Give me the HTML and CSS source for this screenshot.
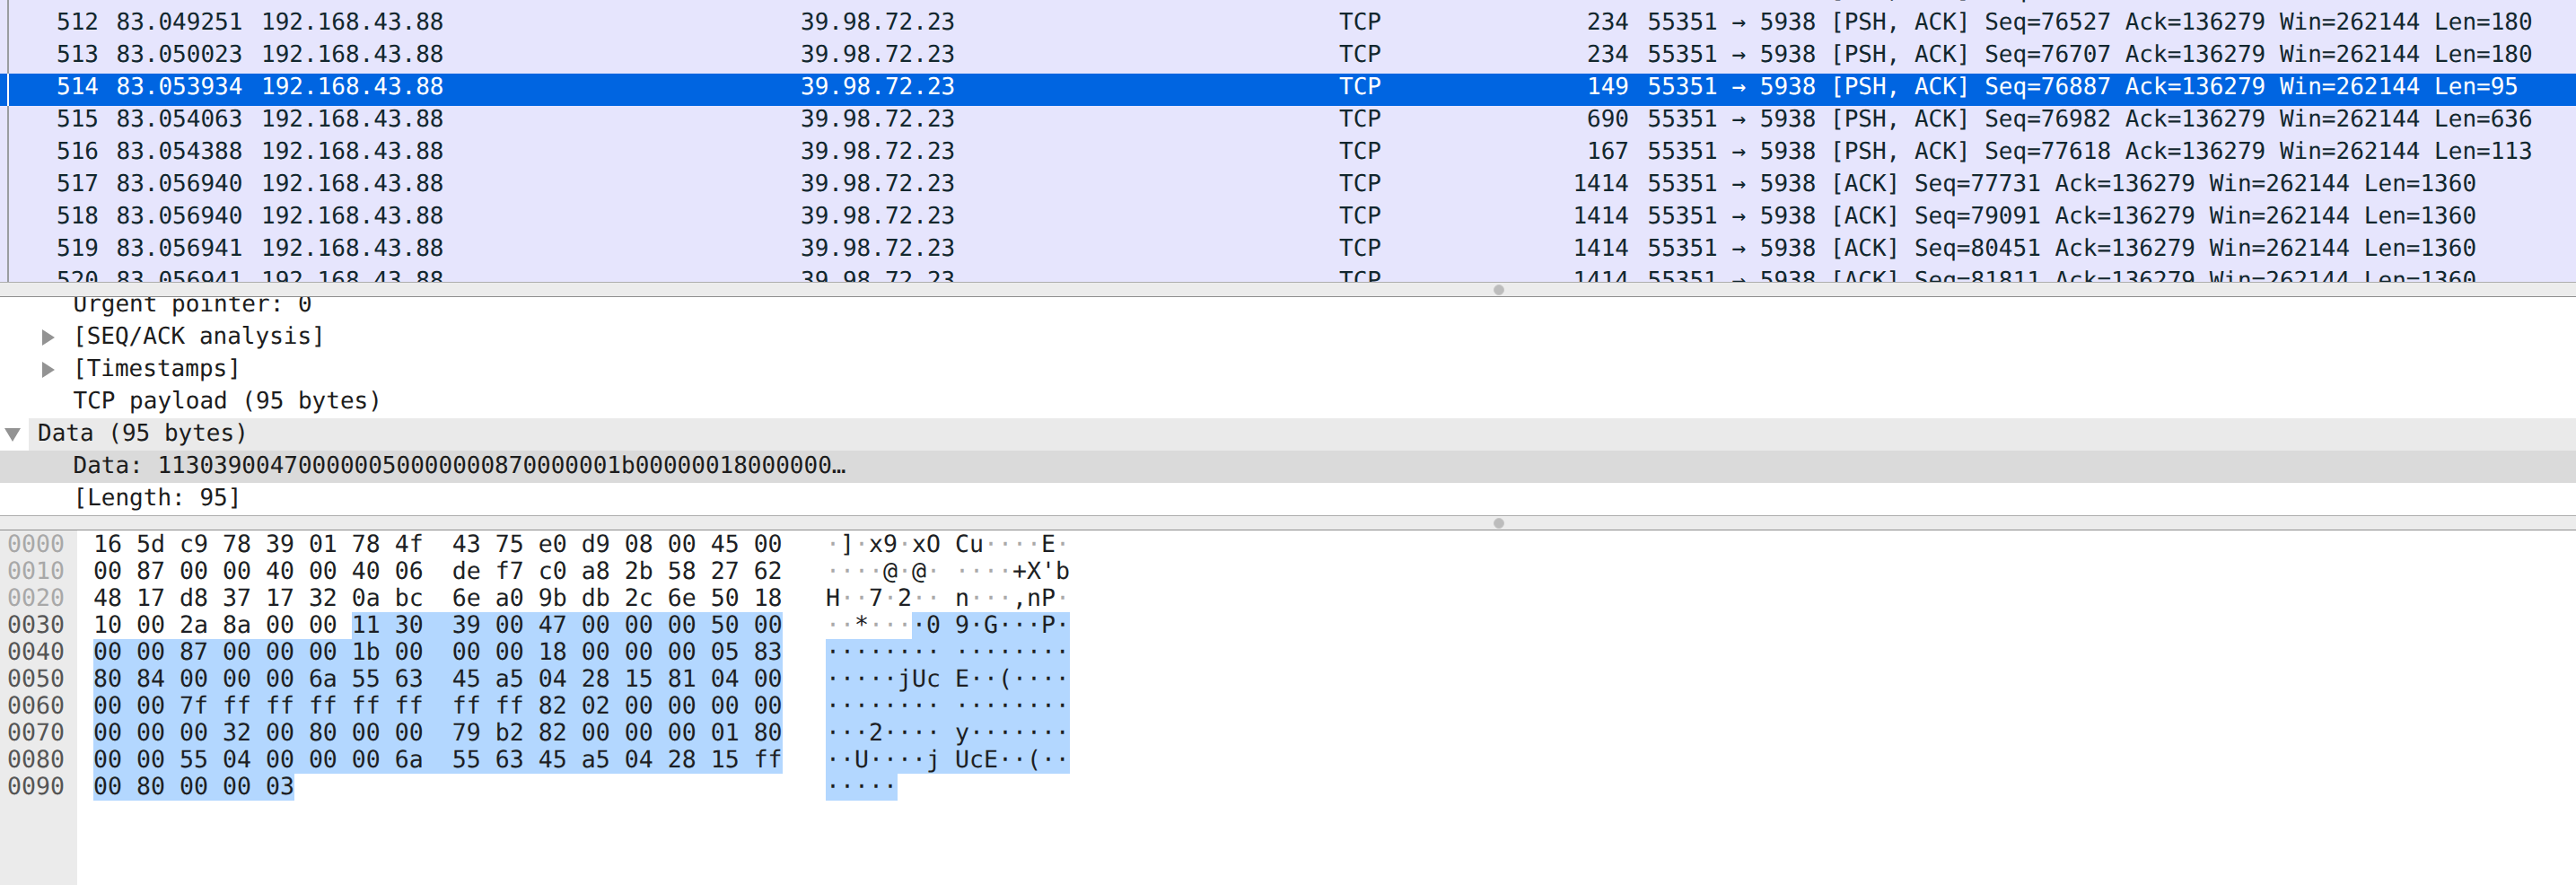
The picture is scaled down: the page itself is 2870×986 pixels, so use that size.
FILE: index.html
```html
<!DOCTYPE html>
<html lang="en">
<head>
<meta charset="utf-8">
<title>Wireshark packet view</title>
<link rel="stylesheet" href="styles.css">
</head>
<body>
<main class="app">
  <section class="packets">
    <div class="packet-list">
      <div class="row"><span class="rule"></span><span class="no">511</span><span class="time">83.048437</span><span>192.168.43.88</span><span>39.98.72.23</span><span>TCP</span><span class="len">234</span><span class="info">55351 → 5938 [PSH, ACK] Seq=76347 Ack=136279 Win=262144 Len=180</span></div>
      <div class="row"><span class="rule"></span><span class="no">512</span><span class="time">83.049251</span><span>192.168.43.88</span><span>39.98.72.23</span><span>TCP</span><span class="len">234</span><span class="info">55351 → 5938 [PSH, ACK] Seq=76527 Ack=136279 Win=262144 Len=180</span></div>
      <div class="row"><span class="rule"></span><span class="no">513</span><span class="time">83.050023</span><span>192.168.43.88</span><span>39.98.72.23</span><span>TCP</span><span class="len">234</span><span class="info">55351 → 5938 [PSH, ACK] Seq=76707 Ack=136279 Win=262144 Len=180</span></div>
      <div class="row selected"><span class="rule"></span><span class="no">514</span><span class="time">83.053934</span><span>192.168.43.88</span><span>39.98.72.23</span><span>TCP</span><span class="len">149</span><span class="info">55351 → 5938 [PSH, ACK] Seq=76887 Ack=136279 Win=262144 Len=95</span></div>
      <div class="row"><span class="rule"></span><span class="no">515</span><span class="time">83.054063</span><span>192.168.43.88</span><span>39.98.72.23</span><span>TCP</span><span class="len">690</span><span class="info">55351 → 5938 [PSH, ACK] Seq=76982 Ack=136279 Win=262144 Len=636</span></div>
      <div class="row"><span class="rule"></span><span class="no">516</span><span class="time">83.054388</span><span>192.168.43.88</span><span>39.98.72.23</span><span>TCP</span><span class="len">167</span><span class="info">55351 → 5938 [PSH, ACK] Seq=77618 Ack=136279 Win=262144 Len=113</span></div>
      <div class="row"><span class="rule"></span><span class="no">517</span><span class="time">83.056940</span><span>192.168.43.88</span><span>39.98.72.23</span><span>TCP</span><span class="len">1414</span><span class="info">55351 → 5938 [ACK] Seq=77731 Ack=136279 Win=262144 Len=1360</span></div>
      <div class="row"><span class="rule"></span><span class="no">518</span><span class="time">83.056940</span><span>192.168.43.88</span><span>39.98.72.23</span><span>TCP</span><span class="len">1414</span><span class="info">55351 → 5938 [ACK] Seq=79091 Ack=136279 Win=262144 Len=1360</span></div>
      <div class="row"><span class="rule"></span><span class="no">519</span><span class="time">83.056941</span><span>192.168.43.88</span><span>39.98.72.23</span><span>TCP</span><span class="len">1414</span><span class="info">55351 → 5938 [ACK] Seq=80451 Ack=136279 Win=262144 Len=1360</span></div>
      <div class="row"><span class="rule"></span><span class="no">520</span><span class="time">83.056941</span><span>192.168.43.88</span><span>39.98.72.23</span><span>TCP</span><span class="len">1414</span><span class="info">55351 → 5938 [ACK] Seq=81811 Ack=136279 Win=262144 Len=1360</span></div>
    </div>
  </section>

  <div class="splitter"><span class="handle"></span></div>

  <section class="details">
    <div class="tree">
      <div class="node leaf">Urgent pointer: 0</div>
      <div class="node branch"><span class="caret-right"></span>[SEQ/ACK analysis]</div>
      <div class="node branch"><span class="caret-right"></span>[Timestamps]</div>
      <div class="node leaf">TCP payload (95 bytes)</div>
      <div class="node root"><span class="root-caret"><span class="caret-down"></span></span><span class="root-label">Data (95 bytes)</span></div>
      <div class="node leaf current">Data: 113039004700000050000000870000001b00000018000000…</div>
      <div class="node leaf">[Length: 95]</div>
    </div>
  </section>

  <div class="splitter"><span class="handle"></span></div>

  <section class="hex">
    <div class="offsets">
      <div class="faint">0000</div>
      <div class="faint">0010</div>
      <div class="faint">0020</div>
      <div>0030</div>
      <div>0040</div>
      <div>0050</div>
      <div>0060</div>
      <div>0070</div>
      <div>0080</div>
      <div>0090</div>
    </div>
    <div class="dump">
      <div class="dump-row"><span class="bytes">16 5d c9 78 39 01 78 4f  43 75 e0 d9 08 00 45 00</span><span class="ascii"><span class="n">·</span>]<span class="n">·</span>x9<span class="n">·</span>xO Cu<span class="n">····</span>E<span class="n">·</span></span></div>
      <div class="dump-row"><span class="bytes">00 87 00 00 40 00 40 06  de f7 c0 a8 2b 58 27 62</span><span class="ascii"><span class="n">····</span>@<span class="n">·</span>@<span class="n">·</span> <span class="n">····</span>+X'b</span></div>
      <div class="dump-row"><span class="bytes">48 17 d8 37 17 32 0a bc  6e a0 9b db 2c 6e 50 18</span><span class="ascii">H<span class="n">··</span>7<span class="n">·</span>2<span class="n">··</span> n<span class="n">···</span>,nP<span class="n">·</span></span></div>
      <div class="dump-row"><span class="bytes">10 00 2a 8a 00 00 <span class="hl">11 30  39 00 47 00 00 00 50 00</span></span><span class="ascii"><span class="n">··</span>*<span class="n">···</span><span class="hl">·0 9·G···P·</span></span></div>
      <div class="dump-row"><span class="bytes"><span class="hl">00 00 87 00 00 00 1b 00  00 00 18 00 00 00 05 83</span></span><span class="ascii"><span class="hl">········ ········</span></span></div>
      <div class="dump-row"><span class="bytes"><span class="hl">80 84 00 00 00 6a 55 63  45 a5 04 28 15 81 04 00</span></span><span class="ascii"><span class="hl">·····jUc E··(····</span></span></div>
      <div class="dump-row"><span class="bytes"><span class="hl">00 00 7f ff ff ff ff ff  ff ff 82 02 00 00 00 00</span></span><span class="ascii"><span class="hl">········ ········</span></span></div>
      <div class="dump-row"><span class="bytes"><span class="hl">00 00 00 32 00 80 00 00  79 b2 82 00 00 00 01 80</span></span><span class="ascii"><span class="hl">···2···· y·······</span></span></div>
      <div class="dump-row"><span class="bytes"><span class="hl">00 00 55 04 00 00 00 6a  55 63 45 a5 04 28 15 ff</span></span><span class="ascii"><span class="hl">··U····j UcE··(··</span></span></div>
      <div class="dump-row"><span class="bytes"><span class="hl">00 80 00 00 03</span></span><span class="ascii"><span class="hl">·····</span></span></div>
    </div>
  </section>
</main>
</body>
</html>
```
FILE: styles.css
```css
* {
  box-sizing: border-box;
}

html,
body {
  margin: 0;
  height: 100%;
  background: #ffffff;
}

body {
  font-family: "DejaVu Sans Mono", "Liberation Mono", monospace;
  text-rendering: geometricPrecision;
  white-space: nowrap;
  overflow: hidden;
}

.app {
  display: grid;
  grid-template-rows: 314px 17px 243px 17px 1fr;
  height: 986px;
}

/* Packet list */
.packets {
  overflow: hidden;
  background: #e6e5fd;
}

.packet-list {
  margin-top: -26px;
  font-size: 26px;
  line-height: 31px;
  color: #12272e;
}

.row {
  display: grid;
  grid-template-columns: 8px 2px 100px 181px 601px 600px 200px 123px 1fr;
  height: 36px;
}

.rule {
  grid-column: 2;
  background: #9a9da1;
}

.no {
  text-align: right;
}

.time {
  padding-left: 19.5px;
}

.len {
  text-align: right;
}

.info {
  padding-left: 20.5px;
}

.row.selected {
  background: #0065e1;
  color: #ffffff;
}

.row.selected .rule {
  background: #ffffff;
}

/* Pane splitters */
.splitter {
  display: flex;
  align-items: center;
  padding-left: 1664px;
  background: #ececec;
  border-top: 1px solid #aeaeae;
  border-bottom: 1px solid #8e8e8e;
}

.handle {
  width: 12px;
  height: 12px;
  border-radius: 50%;
  background: #bcbcbc;
  border: 1px solid #c6c6c6;
}

/* Detail tree */
.details {
  overflow: hidden;
}

.tree {
  margin-top: -9px;
  font-size: 26px;
  line-height: 34px;
  color: #1c1c1c;
}

.node {
  display: flex;
  align-items: flex-start;
  height: 36px;
}

.leaf {
  padding-left: 81.5px;
}

.branch {
  padding-left: 47px;
}

.caret-right {
  align-self: center;
  width: 0;
  height: 0;
  margin-right: 20px;
  border-style: solid;
  border-width: 9px 0 9px 14.5px;
  border-color: transparent transparent transparent #939393;
}

.caret-down {
  width: 0;
  height: 0;
  border-style: solid;
  border-width: 15px 9px 0;
  border-color: #939393 transparent transparent;
}

.root-caret {
  align-self: center;
  display: flex;
  justify-content: flex-start;
  flex: 0 0 32px;
  padding-left: 5px;
}

.root-label {
  flex: 1;
  height: 36px;
  padding-left: 10px;
  background: #eaeaea;
}

.current {
  background: #dadada;
}

/* Hex dump */
.hex {
  display: flex;
  font-size: 26.576px;
  line-height: 30px;
  color: #1d1f24;
  min-height: 0;
}

.offsets {
  flex: 0 0 86px;
  padding: 1px 0 0 8px;
  background: #ebebeb;
  color: #555555;
}

.faint {
  color: #a8a8a8;
}

.dump {
  flex: 1;
  padding: 1px 0 0 18px;
}

.dump-row {
  display: flex;
  gap: 48px;
  height: 30px;
}

.bytes {
  flex: 0 0 768px;
  white-space: pre;
}

.ascii {
  white-space: pre;
}

.hl {
  display: inline-block;
  background: #b3d7ff;
}

.n {
  color: #a9a9a9;
}
```
